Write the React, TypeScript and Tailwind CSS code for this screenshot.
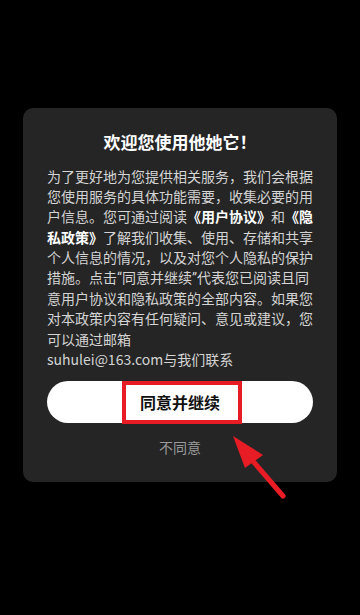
// Privacy consent dialog shown on first launch
import React from "react";

// curly quotes render narrow on the device, so give them a latin font
const q = (s: string) => <span style={{ fontFamily: '"Roboto", sans-serif' }}>{s}</span>;

const lines: React.ReactNode[] = [
  "为了更好地为您提供相关服务，我们会根据",
  "您使用服务的具体功能需要，收集必要的用",
  <>
    户信息。您可通过阅读<b className="font-bold text-white">《用户协议》</b>和<b className="font-bold text-white">《隐</b>
  </>,
  <>
    <b className="font-bold text-white">私政策》</b>了解我们收集、使用、存储和共享
  </>,
  "个人信息的情况，以及对您个人隐私的保护",
  <>
    措施。点击{q("“")}同意并继续{q("”")}代表您已阅读且同
  </>,
  "意用户协议和隐私政策的全部内容。如果您",
  "对本政策内容有任何疑问、意见或建议，您",
  "可以通过邮箱",
  "suhulei@163.com与我们联系",
];

export default function App() {
  return (
    <div
      className="relative h-[615px] w-[360px] overflow-hidden bg-black"
      style={{ fontFamily: '"Noto Sans CJK SC", "Noto Sans", sans-serif' }}
    >
      <div className="pt-[108px] pl-[23px]">
        <div className="w-[314px] rounded-[10px] bg-[#252525] px-[24px] pt-[22px] pb-[25px]">
          <h1 className="text-center text-[17px] leading-[24px] font-bold text-white">
            欢迎您使用他她它！
          </h1>

          <div className="mt-[12px] text-[14px] leading-[20.2px] text-[#d4d4d4]">
            {lines.map((line, i) => (
              <div key={i} className="whitespace-nowrap">
                {line}
              </div>
            ))}
          </div>

          {/* Agree button */}
          <button className="relative mt-[12px] flex h-[42px] w-full items-center justify-center rounded-full bg-white">
            <span className="text-[16px] font-bold text-[#111]">同意并继续</span>
          </button>

          <div className="mt-[14px] text-center text-[14px] leading-[20px] text-[#9a9a9a]">
            不同意
          </div>
        </div>
      </div>

      {/* Annotation: red highlight box */}
      <div className="absolute top-[381px] left-[122px] h-[43px] w-[120px] border-4 border-[#e81c24]" />

      {/* Annotation: red arrow */}
      <svg className="absolute top-0 left-0" width="360" height="615" viewBox="0 0 360 615">
        <line x1="283" y1="496" x2="252" y2="460" stroke="#e81c24" strokeWidth="5" strokeLinecap="round" />
        <polygon points="233,436 245,468 263,455" fill="#e81c24" />
      </svg>
    </div>
  );
}
